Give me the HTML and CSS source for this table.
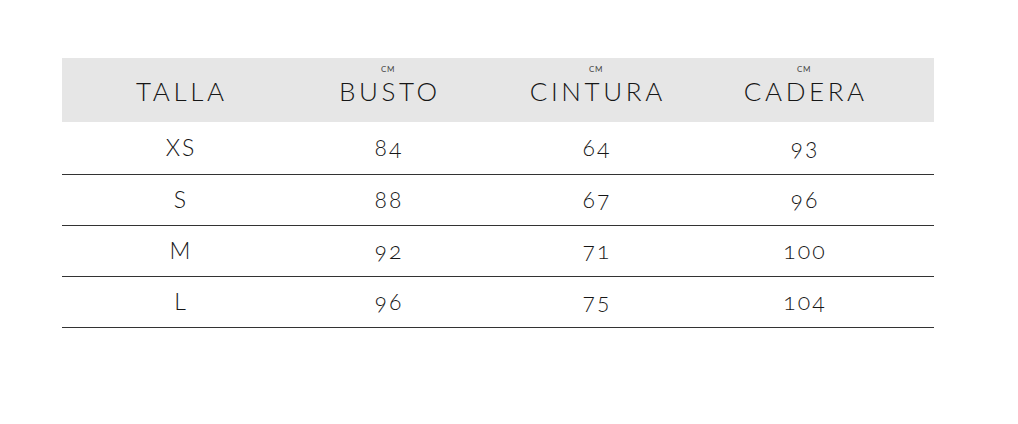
FILE: index.html
```html
<!DOCTYPE html>
<html lang="es">
<head>
<meta charset="utf-8">
<link rel="stylesheet" href="styles.css">
</head>
<body>
<div class="wrap">
  <table class="sizes">
    <thead>
      <tr>
        <th><span class="label">TALLA</span></th>
        <th><span class="label"><span class="unit">CM</span>BUSTO</span></th>
        <th><span class="label"><span class="unit">CM</span>CINTURA</span></th>
        <th><span class="label"><span class="unit">CM</span>CADERA</span></th>
        <th class="spacer"></th>
      </tr>
    </thead>
    <tbody>
      <tr><td>XS</td><td>84</td><td>64</td><td>93</td><td class="spacer"></td></tr>
      <tr><td>S</td><td>88</td><td>67</td><td>96</td><td class="spacer"></td></tr>
      <tr><td>M</td><td>92</td><td>71</td><td>100</td><td class="spacer"></td></tr>
      <tr><td>L</td><td>96</td><td>75</td><td>104</td><td class="spacer"></td></tr>
    </tbody>
  </table>
</div>
</body>
</html>
```
FILE: styles.css
```css
html, body {
  margin: 0;
  padding: 0;
  background: #ffffff;
}
.wrap {
  padding: 58px 0 0 62px;
}
.sizes {
  width: 872px;
  border-collapse: collapse;
  table-layout: fixed;
  font-family: Lato, "Liberation Sans", sans-serif;
  font-weight: 300;
  color: #161616;
  font-variant-numeric: oldstyle-nums;
}
.sizes th,
.sizes td {
  width: 208px;
  padding: 0;
  text-align: center;
}
.sizes th:first-child,
.sizes td:first-child {
  padding-left: 14px;
}
.sizes .spacer {
  width: auto;
}
.sizes thead tr {
  background: #e6e6e6;
  height: 64px;
}
.sizes th {
  font-weight: 300;
  font-size: 26px;
  letter-spacing: 3.6px;
  padding-top: 1px;
  vertical-align: middle;
}
.label {
  position: relative;
  display: inline-block;
  padding-left: 3.6px;
}
.unit {
  position: absolute;
  left: 0;
  right: 0;
  top: -10px;
  font-size: 8px;
  letter-spacing: 0.5px;
  line-height: 8px;
  font-weight: 400;
  color: #444444;
}
.sizes tbody tr {
  height: 51px;
  border-bottom: 1px solid #333333;
}
.sizes tbody tr:first-child {
  height: 52px;
}
.sizes td {
  font-size: 23px;
  font-weight: 300;
  letter-spacing: 2px;
  vertical-align: middle;
  padding-bottom: 2px;
}
.sizes td:not(.spacer) {
  text-indent: 2px;
}
```
